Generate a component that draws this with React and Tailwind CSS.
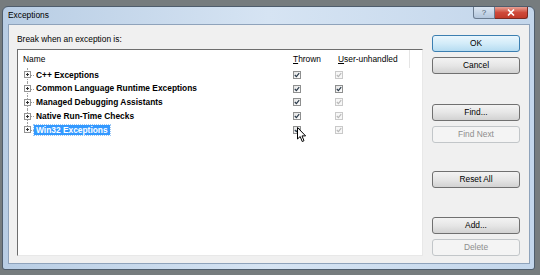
import React from 'react';

const rows = [
    {name: 'C++ Exceptions', user: 'disabled'},
    {name: 'Common Language Runtime Exceptions', user: 'checked'},
    {name: 'Managed Debugging Assistants', user: 'disabled'},
    {name: 'Native Run-Time Checks', user: 'disabled'},
    {name: 'Win32 Exceptions', user: 'disabled', selected: true},
];

const CheckBox = ({disabled}) => (
    <div
        className={`w-[8px] h-[8px] border flex items-center justify-center ${
            disabled ? 'border-[#c9c9c9] bg-[#f7f7f7]' : 'border-[#8e8f8f] bg-gradient-to-br from-[#e3e3e3] to-[#ffffff]'
        }`}
    >
        <svg width="6" height="6" viewBox="0 0 6 6">
            <path
                d="M0.8 3 L2.4 4.6 L5.2 1.2"
                fill="none"
                stroke={disabled ? '#b9b9b9' : '#2a3a4a'}
                strokeWidth="1.2"
            />
        </svg>
    </div>
);

const PlusBox = () => (
    <svg width="7" height="7" viewBox="0 0 7 7">
        <rect x="0.5" y="0.5" width="6" height="6" fill="#fbfbfb" stroke="#959595" />
        <path d="M2 3.5 H5 M3.5 2 V5" stroke="#333" strokeWidth="1" />
    </svg>
);

const Button = ({children, variant}) => {
    let cls = 'border-[#707070] bg-gradient-to-b from-[#f3f3f3] via-[#e6e6e6] to-[#d2d2d2] text-black';
    if (variant === 'default') cls = 'border-[#3c7fb1] bg-gradient-to-b from-[#eaf6fd] via-[#d3ecf9] to-[#b6dcf1] text-black';
    if (variant === 'disabled') cls = 'border-[#c2c6c9] bg-[#f4f4f4] text-[#8d8d8d]';
    return (
        <div className={`h-[17px] w-[88px] rounded-[3px] border flex items-center justify-center text-[8.4px] leading-none ${cls}`}>
            {children}
        </div>
    );
};

const Cursor = () => (
    <svg width="10" height="16" viewBox="0 0 10 16" className="absolute left-[297px] top-[127px]">
        <path d="M0.5 0.5 L0.5 12 L3.2 9.5 L5.2 14.5 L7 13.7 L5 8.9 L8.6 8.9 Z" fill="#fff" stroke="#000" strokeWidth="1" />
    </svg>
);

export default function App() {
    return (
        <div className="w-[540px] h-[275px] bg-[#767c7e] overflow-hidden relative font-['Liberation_Sans',Arial,sans-serif]">
            <div className="ml-[2px] mt-[6px] w-[533px] h-[264px] border border-[#4f5d6c] rounded-t-[6px] rounded-b-[3px] bg-gradient-to-r from-[#b8cde4] via-[#d6e4f3] to-[#c3d6eb] flex flex-col">
                <div className="h-[17px] flex justify-between items-start">
                    <div className="pl-[5px] pt-[3px] text-[8.4px] leading-[10px] text-black">Exceptions</div>
                    <div className="flex mr-[6px]">
                        <div className="w-[22px] h-[12px] border border-[#6b7c90] border-t-0 rounded-bl-[3px] bg-gradient-to-b from-[#dbe6f2] to-[#b3c6dc] flex items-center justify-center text-[8px] leading-none text-[#4c5b6c]">
                            ?
                        </div>
                        <div className="w-[33px] h-[12px] border border-[#7a2a22] border-t-0 border-l-0 rounded-br-[3px] bg-gradient-to-b from-[#e6a095] via-[#cf4a3b] to-[#c13a2a] flex items-center justify-center">
                            <svg width="8" height="7" viewBox="0 0 8 7">
                                <path d="M1 0.5 L7 6.5 M7 0.5 L1 6.5" stroke="#fff" strokeWidth="1.6" />
                            </svg>
                        </div>
                    </div>
                </div>
                <div className="ml-[5px] mr-[4px] h-[240px] border border-[#8fa3bb] bg-[#f0f0f0] flex">
                    <div className="w-[423px] pl-[8px]">
                        <div className="mt-[9px] h-[10px] text-[8.4px] leading-[10px] text-black">Break when an exception is:</div>
                        <div className="mt-[5px] w-[406px] h-[207px] bg-white border border-t-[#6d6d6d] border-l-[#6d6d6d] border-b-[#e8e8e8] border-r-[#e8e8e8]">
                            <div className="h-[18px] flex items-center text-[8.4px] leading-none text-black relative">
                                <div className="w-[275px] pl-[5px]">Name</div>
                                <div className="w-[42px]">
                                    <span className="underline">T</span>hrown
                                </div>
                                <div className="pl-[3px]">
                                    <span className="underline">U</span>ser-unhandled
                                </div>
                                <div className="absolute left-[391px] top-0 h-[18px] w-px bg-[#e5e5e5]" />
                            </div>
                            {rows.map((row, i) => (
                                <div key={row.name} className="h-[13.75px] flex items-center">
                                    <div className="w-[275px] h-full flex items-center">
                                        <div className="w-[16px] h-full relative">
                                            <div
                                                className={`absolute left-[9px] w-0 border-l border-dotted border-[#a0a0a0] ${
                                                    i === rows.length - 1 ? 'top-0 h-1/2' : 'top-0 h-full'
                                                }`}
                                            />
                                            <div className="absolute left-[13px] top-1/2 w-[3px] h-0 border-t border-dotted border-[#a0a0a0]" />
                                            <div className="absolute left-[6px] top-[3.4px]">
                                                <PlusBox />
                                            </div>
                                        </div>
                                        <div
                                            className={`px-[2px] h-[10px] flex items-center text-[8.4px] leading-none font-bold ${
                                                row.selected ? 'bg-[#3399ff] text-white outline outline-1 outline-dotted outline-[#9cc8f5]' : 'text-black'
                                            }`}
                                        >
                                            {row.name}
                                        </div>
                                    </div>
                                    <div className="w-[42px]">
                                        <CheckBox />
                                    </div>
                                    <div>
                                        <CheckBox disabled={row.user === 'disabled'} />
                                    </div>
                                </div>
                            ))}
                        </div>
                    </div>
                    <div className="w-[88px] flex flex-col">
                        <div className="mt-[10px]">
                            <Button variant="default">OK</Button>
                        </div>
                        <div className="mt-[5px]">
                            <Button>Cancel</Button>
                        </div>
                        <div className="mt-[30px]">
                            <Button>Find...</Button>
                        </div>
                        <div className="mt-[5px]">
                            <Button variant="disabled">Find Next</Button>
                        </div>
                        <div className="mt-[28px]">
                            <Button>Reset All</Button>
                        </div>
                        <div className="mt-[29px]">
                            <Button>Add...</Button>
                        </div>
                        <div className="mt-[5px]">
                            <Button variant="disabled">Delete</Button>
                        </div>
                    </div>
                </div>
            </div>
            <Cursor />
        </div>
    );
}
